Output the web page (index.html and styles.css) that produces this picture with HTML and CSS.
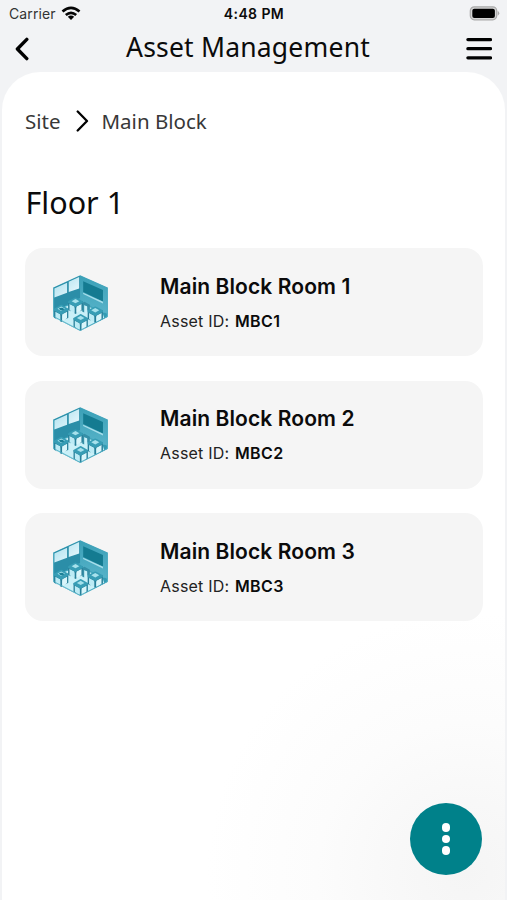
FILE: index.html
```html
<!DOCTYPE html>
<html lang="en">
<head>
<meta charset="utf-8">
<meta name="viewport" content="width=device-width, initial-scale=1">
<title>Asset Management</title>
<link rel="stylesheet" href="styles.css">
</head>
<body>
<svg class="defs" width="0" height="0" aria-hidden="true">
  <defs>
    <linearGradient id="glass" x1="0" y1="0" x2="1" y2="1"><stop offset="0" stop-color="#a9dfec"/><stop offset="1" stop-color="#eefaff"/></linearGradient>
    <linearGradient id="wall" x1="0" y1="0" x2="0" y2="1"><stop offset="0" stop-color="#3ba0b7"/><stop offset="1" stop-color="#57b3c9"/></linearGradient>
    <symbol id="desk" viewBox="0 0 44 46" preserveAspectRatio="none">
      <path d="M1 11v24l8 4V24l10 5v15l3 2 3-2V29l10-5v15l8-4V11z" fill="#277f99"/>
      <path d="M5 19l14 7v17L5 36z" fill="#bcebf5"/>
      <path d="M25 26l14-7v17l-14 7z" fill="#d9f5fa"/>
      <path d="M22 0l21 11v5L22 27 1 16v-5z" fill="#379db5"/>
      <path d="M22 5l11 6-11 6-11-6z" fill="#a6e1ec"/>
    </symbol>
    <symbol id="room" viewBox="40 31 164 167">
      <path d="M121 32l82 36v88l-82 42-80-42V68z" fill="#43a5bc"/>
      <path d="M42 69l79-36v66l-79 42z" fill="#2b8ea8"/>
      <path d="M121 33l81 36v80l-81-42z" fill="url(#wall)"/>
      <path d="M44 71l38-17v30l-38 14zM87 51l31-14v34l-31 11z" fill="url(#glass)"/>
      <path d="M130 50l59 26v34l-59-28z" fill="#147b91"/>
      <path d="M130 84l59 27v5l-59-28z" fill="#a8dfeb"/>
      <path d="M42 140l68-28 92 35v8l-81 42-79-41z" fill="#c9f0f8"/>
      <path d="M187 141l15 5v9l-9 5z" fill="#329bb3"/>
      <path d="M117 119l17-8 16 9v19l-8-3v-12l-9-4v23l-6-3v-17z" fill="#358fa7"/>
      <use href="#desk" x="84" y="97" width="46" height="50"/>
      <use href="#desk" x="42" y="119" width="45" height="52"/>
      <use href="#desk" x="142" y="124" width="48" height="50"/>
      <use href="#desk" x="100" y="147" width="45" height="50"/>
      <path d="M57 131q10-5 17 2-8 8-17-2" fill="#1c8097"/>
      <path d="M42 69v86l79 41 81-41V69" fill="none" stroke="#48a9bf" stroke-width="2.5"/>
    </symbol>
  </defs>
</svg>
<div class="app">
  <div class="status">
    <div class="carrier"><span>Carrier</span>
      <svg width="20" height="15" viewBox="0 0 20 15"><g fill="none" stroke="#050505" stroke-width="2.7"><path d="M1.5 5.6Q10-1.7 18.5 5.6"/><path d="M4.8 9Q10 4.7 15.2 9"/></g><path d="M6.8 10.7q3.2-2.3 6.4 0L10 14z" fill="#050505"/></svg>
    </div>
    <div class="time">4:48 PM</div>
    <svg class="battery" width="31" height="15" viewBox="0 0 31 15"><rect x="1.3" y=".8" width="26.4" height="13" rx="4" fill="#d5d5d5" stroke="#aaa" stroke-width="1.2"/><rect x="3.3" y="2.7" width="22.6" height="9.4" rx="2" fill="#000"/><path d="M28.7 4.8q3.2 2.5 0 5z" fill="#aaa"/></svg>
  </div>
  <header class="header">
    <svg width="16" height="24" viewBox="0 0 16 24"><path d="M12.8 2.4L3.4 12l9.4 9.6" fill="none" stroke="#000" stroke-width="3.4" stroke-linecap="round" stroke-linejoin="round"/></svg>
    <h1>Asset Management</h1>
    <svg width="26" height="24" viewBox="0 0 26 24"><path d="M1.9 2.6h22.6M1.9 11.7h22.6M1.9 20.8h22.6" stroke="#000" stroke-width="3.3" stroke-linecap="round"/></svg>
  </header>
  <main class="sheet">
    <nav class="crumbs"><span class="site">Site</span>
      <svg width="13" height="22" viewBox="0 0 13 22"><path d="M1.7 1.5L11 11l-9.3 9.5" fill="none" stroke="#000" stroke-width="2.3" stroke-linecap="round" stroke-linejoin="round"/></svg>
      <span class="block">Main Block</span></nav>
    <h2>Floor 1</h2>
    <div class="list">
      <article class="card"><svg class="room"><use href="#room"/></svg><div><h3>Main Block Room 1</h3><p>Asset ID: <b>MBC1</b></p></div></article>
      <article class="card"><svg class="room"><use href="#room"/></svg><div><h3>Main Block Room 2</h3><p>Asset ID: <b>MBC2</b></p></div></article>
      <article class="card"><svg class="room"><use href="#room"/></svg><div><h3>Main Block Room 3</h3><p>Asset ID: <b>MBC3</b></p></div></article>
    </div>
  </main>
  <button class="fab" aria-label="More"><i></i><i></i><i></i></button>
</div>
</body>
</html>
```
FILE: styles.css
```css
* { box-sizing: border-box; }
body { margin: 0; font-family: Inter, "Liberation Sans", sans-serif; color: #0b0b0b; }
h1, h2, h3, p { margin: 0; font-weight: 400; }
svg { display: block; flex: none; }
.defs { position: absolute; }
.app { position: relative; height: 900px; overflow: hidden; background: #f2f3f5; display: flex; flex-direction: column; }
.status { height: 27px; padding: 0 7px 0 9px; display: grid; grid-template-columns: 1fr auto 1fr; align-items: center; }
.carrier { display: flex; align-items: center; gap: 5px; font-size: 14px; letter-spacing: .1px; color: #333; }
.time { font-size: 14px; font-weight: 600; letter-spacing: .4px; position: relative; left: -.5px; }
.battery { justify-self: end; }
.header { height: 45px; padding: 0 15px 3px 14px; display: flex; align-items: center; justify-content: space-between; }
.header svg { margin-top: 2px; }
h1 { font: 400 26.5px/36px "Noto Sans", sans-serif; letter-spacing: .2px; margin-top: -2px; }
.sheet { flex: 1; margin: 0 2px; padding: 35px 22px 0 23px; border-radius: 38px 38px 0 0; background: radial-gradient(circle at 465px 800px, #f5f5f5 0, #f8f8f8 70px, #fcfcfc 150px, #fff 260px); }
.crumbs { display: flex; align-items: center; height: 28px; font: 400 20.5px/28px "Noto Sans", sans-serif; color: #383838; }
.crumbs svg { margin: -1px 13px 0 15px; }
h2 { font: 400 30.5px/40px "Noto Sans", sans-serif; margin-top: 47px; padding-left: .5px; }
.list { display: grid; gap: 24.5px; margin-top: 26.4px; }
.card { height: 108px; padding: 0 28px; border-radius: 18px; background: #f5f5f5; display: flex; align-items: center; gap: 52px; }
.room { width: 55px; height: 56px; margin-top: 1px; }
h3 { font-size: 21px; line-height: 28px; font-weight: 600; letter-spacing: .1px; }
.card p { font-size: 16px; line-height: 22px; margin-top: 9px; letter-spacing: .2px; color: #222; }
.card b { font-weight: 600; letter-spacing: .4px; color: #0b0b0b; margin-left: 1px; }
.fab { position: absolute; right: 25px; bottom: 25px; width: 72px; height: 72px; padding: 0; border: 0; border-radius: 50%; background: #00818a; display: flex; flex-direction: column; align-items: center; justify-content: center; gap: 3.3px; }
.fab i { width: 8.3px; height: 8.3px; border-radius: 50%; background: #fff; }
```
